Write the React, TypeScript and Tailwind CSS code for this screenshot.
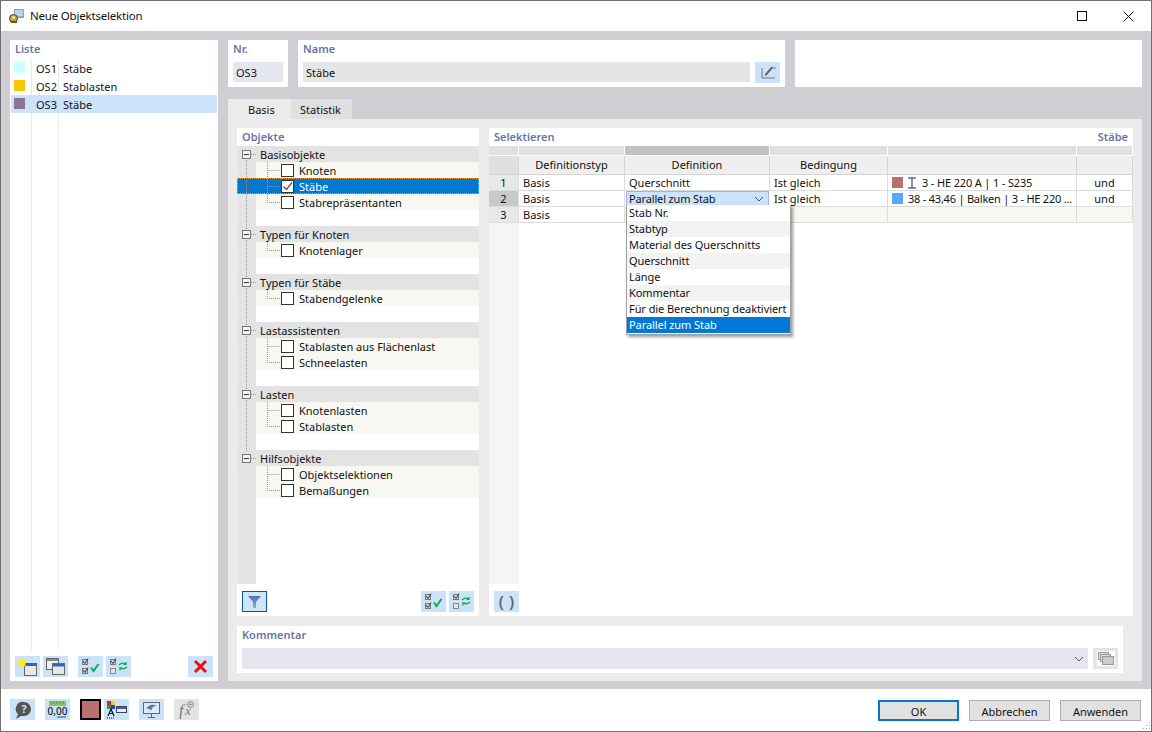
import React from "react";

const Title = ({ children, className = "" }: { children: React.ReactNode; className?: string }) => (
  <div className={`text-[#6a74a4] font-semibold ${className}`}>{children}</div>
);

const IconBtn = ({ children, className = "bg-[#cae3f8]" }: { children: React.ReactNode; className?: string }) => (
  <div className={`w-[25px] h-[21px] shrink-0 flex items-center justify-center ${className}`}>{children}</div>
);

const CheckAll = () => (
  <svg width="22" height="19" viewBox="0 0 22 19">
    <rect x="2.5" y="2.5" width="5" height="5" fill="#d8d8d8" stroke="#777" />
    <path d="M3 4l2 2.5L8 1.5" fill="none" stroke="#333" />
    <rect x="2.5" y="11.5" width="5" height="5" fill="#d8d8d8" stroke="#777" />
    <path d="M3 13l2 2.5 3-5" fill="none" stroke="#333" />
    <path d="M11 10.5l2.5 3.5 5-7" fill="none" stroke="#10a850" strokeWidth="2" />
  </svg>
);
const CheckSwap = () => (
  <svg width="22" height="19" viewBox="0 0 22 19">
    <rect x="2.5" y="2.5" width="5" height="5" fill="#d8d8d8" stroke="#777" />
    <path d="M3 4l2 2.5L8 1.5" fill="none" stroke="#333" />
    <rect x="2.5" y="11.5" width="5" height="5" fill="#dfe8f0" stroke="#888" />
    <path d="M11 8c2-2 5-2 7-1M18 5v2.4h-2.4" fill="none" stroke="#10a850" strokeWidth="1.3" />
    <path d="M19 10c-2 2-5 2-7 1M12 13.4V11h2.4" fill="none" stroke="#10a850" strokeWidth="1.3" />
  </svg>
);
const NewWin = () => (
  <svg width="23" height="20" viewBox="0 0 23 20">
    <rect x="8.5" y="6.5" width="12" height="12" fill="#e8e8e8" stroke="#666" />
    <rect x="9" y="6" width="12" height="3" fill="#2a62c8" />
    <path d="M6 0l1 3 3-1-1 2.5 3 1-3 1 1 3-3-1.5-1 3-1-3-3 1.5 1-3-3-1 3-1-1-2.5 3 1z" fill="#f8ec20" />
  </svg>
);
const CopyWin = () => (
  <svg width="23" height="20" viewBox="0 0 23 20">
    <rect x="2.5" y="1.5" width="12" height="11" fill="#eee" stroke="#666" />
    <rect x="3" y="2" width="11" height="2" fill="#889" />
    <rect x="8.5" y="6.5" width="12" height="11" fill="#e8e8e8" stroke="#666" />
    <rect x="9" y="7" width="11" height="2.5" fill="#2a62c8" />
  </svg>
);

const Chevron = () => (
  <svg width="10" height="6" viewBox="0 0 10 6"><path d="M1 1l4 4 4-4" fill="none" stroke="#555" strokeWidth="1" /></svg>
);

const ListRow = ({ color, no, name, sel }: { color: string; no: string; name: string; sel?: boolean }) => (
  <div className={`flex h-[18px] items-center ${sel ? "bg-[#cce4fb]" : ""}`}>
    <div className={`w-[21px] h-full pl-[3px] pt-[3px] ${sel ? "" : "border-r border-[#e8e8e8]"}`}>
      <div className="w-[11px] h-[11px]" style={{ background: color }} />
    </div>
    <div className={`w-[27px] h-full pl-[4px] leading-[20px] ${sel ? "" : "border-r border-[#e8e8e8]"}`}>{no}</div>
    <div className="pl-[4px] h-full leading-[20px]">{name}</div>
  </div>
);

const TreeHead = ({ label }: { label: string }) => (
  <div className="flex h-4 bg-[#e3e3e3] items-center">
    <div className="w-[19px] h-full flex items-center pl-[5px] shrink-0">
      <div className="relative w-[9px] h-[9px] border border-[#777] bg-[#f4f4f4] flex items-center justify-center">
        <div className="w-[5px] h-px bg-[#333]" />
      </div>
      <div className="w-[5px] border-t border-dotted border-[#999]" />
    </div>
    <span className="ml-[4px] h-full leading-[18px]">{label}</span>
  </div>
);

const Connector = ({ last }: { last?: boolean }) => (
  <svg width="25" height="16" viewBox="0 0 25 16" className="shrink-0">
    <path d={last ? "M11.5 0V8.5H24" : "M11.5 0V16M11.5 8.5H24"} stroke="#999" strokeDasharray="1 1" fill="none" />
  </svg>
);

const TreeItem = ({ label, last, sel }: { label: string; last?: boolean; sel?: boolean }) => (
  <div
    className={`flex h-4 items-center ${
      sel ? "bg-[#0078d0] text-white outline outline-1 -outline-offset-1 outline-dotted outline-[#f0a040]" : "bg-[#f7f8f2]"
    }`}
  >
    <div className={`w-[19px] h-full shrink-0 ${sel ? "" : "bg-[#e5e5e5]"}`} />
    <Connector last={last} />
    <div className="w-[13px] h-[13px] border border-[#333] bg-white shrink-0 flex items-center justify-center">
      {sel && (
        <svg width="11" height="11" viewBox="0 0 11 11"><path d="M1.5 5.5l3 3 5.5-7" fill="none" stroke="#555" strokeWidth="1.3" /></svg>
      )}
    </div>
    <span className="ml-[5px] h-full leading-[18px]">{label}</span>
  </div>
);

const TreeBlank = () => (
  <div className="flex h-4"><div className="w-[19px] bg-[#e5e5e5]" /></div>
);

const groups: { h: string; items: string[] }[] = [
  { h: "Typen für Knoten", items: ["Knotenlager"] },
  { h: "Typen für Stäbe", items: ["Stabendgelenke"] },
  { h: "Lastassistenten", items: ["Stablasten aus Flächenlast", "Schneelasten"] },
  { h: "Lasten", items: ["Knotenlasten", "Stablasten"] },
  { h: "Hilfsobjekte", items: ["Objektselektionen", "Bemaßungen"] },
];

const widths = ["w-[30px]", "w-[106px]", "w-[145px]", "w-[118px]", "w-[189px]", "w-[56px]"];

const dropdown = [
  "Stab Nr.",
  "Stabtyp",
  "Material des Querschnitts",
  "Querschnitt",
  "Länge",
  "Kommentar",
  "Für die Berechnung deaktiviert",
];

const Dropdown = () => (
  <div className="absolute left-[1px] top-[14px] w-[165px] z-10 bg-white border border-[#a0a0a0] border-t-0 pb-px tracking-[-0.07px] shadow-[2px_2px_3px_rgba(0,0,0,0.4)]">
    {dropdown.map((d, i) => (
      <div key={d} className={`h-4 leading-[15px] pl-[2px] whitespace-nowrap ${i % 2 ? "bg-[#f3f3f3]" : "bg-white"}`}>{d}</div>
    ))}
    <div className="h-4 leading-[15px] pl-[2px] bg-[#0078d7] text-white">Parallel zum Stab</div>
  </div>
);

const Cell = ({ w, className = "", children }: { w: string; className?: string; children?: React.ReactNode }) => (
  <div className={`${w} h-4 shrink-0 border-r border-b border-[#dcdcdc] leading-[15px] whitespace-nowrap overflow-hidden ${className}`}>{children}</div>
);

const Table = () => (
  <div className="flex flex-col flex-1 min-h-0 text-[#111]">
    <div className="flex h-[9px] shrink-0">
      {widths.map((w, i) => (
        <div key={i} className={`${w} border-r border-white ${i === 2 ? "bg-[#c2c2c2]" : "bg-[#e0e0e0]"}`} />
      ))}
    </div>
    <div className="flex h-[19px] shrink-0 mt-px">
      {["", "Definitionstyp", "Definition", "Bedingung", "", ""].map((t, i) => (
        <div key={i} className={`${widths[i]} border-r border-b border-[#d4d4d4] text-center leading-[18px] ${i === 0 ? "bg-[#e0e0e0]" : "bg-[#efefef]"}`}>{t}</div>
      ))}
    </div>
    <div className="flex shrink-0">
      <Cell w={widths[0]} className="bg-[#e8e8e8] text-center">1</Cell>
      <Cell w={widths[1]} className="pl-[4px]">Basis</Cell>
      <Cell w={widths[2]} className="pl-[4px]">Querschnitt</Cell>
      <Cell w={widths[3]} className="pl-[4px]">Ist gleich</Cell>
      <Cell w={widths[4]} className="pl-[4px] flex items-center">
        <div className="w-[11px] h-[11px] bg-[#b87070] shrink-0" />
        <svg width="10" height="12" viewBox="0 0 10 12" className="ml-[4px] shrink-0"><path d="M1 1h8M1 11h8M5 1v10" stroke="#1a1a70" fill="none" /></svg>
        <span className="ml-[5px] tracking-[-0.15px]">3 - HE 220 A | 1 - S235</span>
      </Cell>
      <Cell w={widths[5]} className="text-center">und</Cell>
    </div>
    <div className="flex shrink-0">
      <Cell w={widths[0]} className="bg-[#c8c8c8] text-center">2</Cell>
      <Cell w={widths[1]} className="pl-[4px]">Basis</Cell>
      <div className={`${widths[2]} relative h-4 shrink-0`}>
        <div className="h-4 ml-px mr-px bg-[#cce4fb] border border-[#a8b0e0] flex items-center justify-between pl-[2px] pr-[4px] leading-[14px]">
          <span className="tracking-[-0.15px]">Parallel zum Stab</span>
          <Chevron />
        </div>
        <Dropdown />
      </div>
      <Cell w={widths[3]} className="pl-[4px]">Ist gleich</Cell>
      <Cell w={widths[4]} className="pl-[4px] flex items-center">
        <div className="w-[11px] h-[11px] bg-[#55a8fa] shrink-0" />
        <span className="ml-[5px] tracking-[-0.22px]">38 - 43,46 | Balken | 3 - HE 220 ...</span>
      </Cell>
      <Cell w={widths[5]} className="text-center">und</Cell>
    </div>
    <div className="flex shrink-0">
      <Cell w={widths[0]} className="bg-[#e8e8e8] text-center">3</Cell>
      <Cell w={widths[1]} className="pl-[4px]">Basis</Cell>
      <Cell w={widths[2]} className="bg-[#f7f8f2]" />
      <Cell w={widths[3]} className="bg-[#f7f8f2]" />
      <Cell w={widths[4]} className="bg-[#f7f8f2]" />
      <Cell w={widths[5]} className="bg-[#f7f8f2]" />
    </div>
    <div className="w-[30px] flex-1 bg-[#f5f5f5]" />
  </div>
);

const PushButton = ({ label, def }: { label: string; def?: boolean }) => (
  <div className={`w-[81px] h-[21px] bg-[#e1e1e1] text-center ${def ? "border-2 border-[#0078d7] leading-[19px]" : "border border-[#adadad] leading-[21px]"}`}>{label}</div>
);

export default function App() {
  return (
    <div
      className="w-[1152px] h-[732px] border border-[#707070] bg-white flex flex-col text-[11px] text-[#111] overflow-hidden"
      style={{ fontFamily: '"Noto Sans", "Liberation Sans", sans-serif' }}
    >
      {/* title bar */}
      <div className="h-[30px] shrink-0 flex items-center pl-[8px] pr-[17px]">
        <svg width="16" height="16" viewBox="0 0 16 16" className="shrink-0">
          <rect x="5" y="1" width="10" height="9" fill="#7fa8d8" />
          <path d="M6 3h8M6 5h8M6 7h8" stroke="#fff" />
          <circle cx="4.5" cy="10.5" r="4" fill="#c8a040" stroke="#604010" />
          <circle cx="4.5" cy="9.5" r="1.3" fill="#fff" />
          <rect x="2" y="13" width="6" height="2" fill="#705020" />
        </svg>
        <span className="ml-[5px] text-[11.5px] tracking-[-0.2px]">Neue Objektselektion</span>
        <svg width="10" height="10" viewBox="0 0 10 10" className="ml-auto mr-[36px]"><rect x="0.5" y="0.5" width="9" height="9" fill="none" stroke="#111" /></svg>
        <svg width="11" height="11" viewBox="0 0 11 11"><path d="M0.5 0.5l10 10M10.5 0.5l-10 10" stroke="#111" fill="none" /></svg>
      </div>

      {/* body */}
      <div className="flex-1 min-h-0 bg-[#d0ced3] pt-[9px] pb-[8px] px-[9px] flex gap-[10px]">
        {/* list */}
        <div className="w-[208px] bg-white flex flex-col px-px">
          <Title className="h-[19px] leading-[18px] pl-[4px]">Liste</Title>
          <ListRow color="#ccffff" no="OS1" name="Stäbe" />
          <ListRow color="#f9c400" no="OS2" name="Stablasten" />
          <ListRow color="#8a7597" no="OS3" name="Stäbe" sel />
          <div className="flex flex-1 min-h-0">
            <div className="w-[21px] border-r border-[#e8e8e8]" />
            <div className="w-[27px] border-r border-[#e8e8e8]" />
          </div>
          <div className="h-[31px] shrink-0 flex pt-[6px] pl-[4px]">
            <IconBtn><NewWin /></IconBtn>
            <IconBtn className="bg-[#cae3f8] ml-[3px]"><CopyWin /></IconBtn>
            <IconBtn className="bg-[#cae3f8] ml-[10px]"><CheckAll /></IconBtn>
            <IconBtn className="bg-[#cae3f8] ml-[3px]"><CheckSwap /></IconBtn>
            <IconBtn className="bg-[#cae3f8] ml-[57px]">
              <svg width="15" height="15" viewBox="0 0 15 15"><path d="M2 2l11 11M13 2L2 13" stroke="#e81010" strokeWidth="3" fill="none" /></svg>
            </IconBtn>
          </div>
        </div>

        {/* right column */}
        <div className="w-[914px] flex flex-col">
          <div className="flex h-[47px] gap-[10px] shrink-0">
            <div className="w-[60px] bg-white px-[5px]">
              <Title className="h-[22px] leading-[18px]">Nr.</Title>
              <div className="h-[20px] bg-[#e6e6f0] pl-[3px] leading-[22px]">OS3</div>
            </div>
            <div className="w-[487px] bg-white px-[5px]">
              <Title className="h-[22px] leading-[18px]">Name</Title>
              <div className="flex gap-[5px]">
                <div className="flex-1 h-[20px] bg-[#e5e5e5] pl-[3px] leading-[22px]">Stäbe</div>
                <IconBtn className="bg-[#cae3f8] h-[20px]">
                  <svg width="18" height="16" viewBox="0 0 18 16">
                    <path d="M3 3v10h13" stroke="#777" fill="none" />
                    <path d="M12.5 1.5l1.5 1.5-6 7-2.5 1 1-2.5z" fill="#666" />
                    <path d="M13 3h4" stroke="#777" />
                  </svg>
                </IconBtn>
              </div>
            </div>
            <div className="flex-1 bg-white" />
          </div>

          <div className="flex h-[20px] mt-[12px] shrink-0">
            <div className="w-[63px] bg-[#ebebeb] pl-[20px] leading-[21px]">Basis</div>
            <div className="w-[61px] bg-[#e0e0e0] pl-[9px] leading-[21px]">Statistik</div>
          </div>

          <div className="flex-1 min-h-0 bg-[#ebebeb] pt-[9px] px-[9px] flex flex-col">
            <div className="flex h-[488px] gap-[10px] shrink-0">
              {/* objects */}
              <div className="w-[242px] bg-white flex flex-col relative">
                <Title className="h-[18px] leading-[18px] pl-[5px]">Objekte</Title>
                <div className="absolute left-[9px] top-[27px] h-[296px] border-l border-dotted border-[#999] z-0" />
                <TreeHead label="Basisobjekte" />
                <TreeItem label="Knoten" />
                <TreeItem label="Stäbe" sel />
                <TreeItem label="Stabrepräsentanten" last />
                <TreeBlank />
                {groups.map((g) => (
                  <React.Fragment key={g.h}>
                    <TreeHead label={g.h} />
                    {g.items.map((it, i) => (
                      <TreeItem key={it} label={it} last={i === g.items.length - 1} />
                    ))}
                    <TreeBlank />
                  </React.Fragment>
                ))}
                <div className="w-[19px] flex-1 bg-[#e5e5e5]" />
                <div className="h-[32px] shrink-0 flex items-start pt-[7px] pl-[5px]">
                  <IconBtn className="bg-[#cfe5f9] border border-[#005a9e]">
                    <svg width="15" height="14" viewBox="0 0 15 14">
                      <defs>
                        <linearGradient id="fn" x1="0" y1="0" x2="0" y2="1">
                          <stop offset="0" stopColor="#4f72b0" />
                          <stop offset="1" stopColor="#86aee8" />
                        </linearGradient>
                      </defs>
                      <path d="M1 1h13L9 7v6H6V7z" fill="url(#fn)" />
                    </svg>
                  </IconBtn>
                  <IconBtn className="bg-[#cae3f8] ml-auto"><CheckAll /></IconBtn>
                  <IconBtn className="bg-[#cae3f8] ml-[3px] mr-[5px]"><CheckSwap /></IconBtn>
                </div>
              </div>

              {/* selection */}
              <div className="w-[644px] bg-white flex flex-col">
                <div className="h-[18px] shrink-0 flex justify-between px-[5px] leading-[18px]">
                  <Title>Selektieren</Title>
                  <Title>Stäbe</Title>
                </div>
                <Table />
                <div className="h-[32px] shrink-0 pt-[7px] pl-[5px]">
                  <IconBtn className="bg-[#cae3f8] font-semibold text-[#666] text-[16px] leading-none gap-[5px]">
                    <span>(</span>
                    <span>)</span>
                  </IconBtn>
                </div>
              </div>
            </div>

            <div className="w-[886px] h-[47px] mt-[10px] bg-white px-[5px] shrink-0">
              <Title className="h-[22px] leading-[18px]">Kommentar</Title>
              <div className="flex gap-[5px]">
                <div className="flex-1 h-[21px] bg-[#e6e6f0] flex items-center justify-end pr-[4px]"><Chevron /></div>
                <IconBtn className="bg-[#e4e4e4]">
                  <svg width="18" height="15" viewBox="0 0 18 15">
                    <rect width="18" height="15" fill="#fff" />
                    <rect x="1.5" y="1.5" width="10" height="7" fill="#ddd" stroke="#999" />
                    <rect x="3.5" y="3.5" width="10" height="7" fill="#ddd" stroke="#999" />
                    <rect x="5.5" y="5.5" width="11" height="8" fill="#ccc" stroke="#999" />
                  </svg>
                </IconBtn>
              </div>
            </div>
          </div>
        </div>
      </div>

      {/* bottom bar */}
      <div className="h-[42px] shrink-0 flex items-start pl-[9px] relative">
        <div className="flex items-start mt-[10px]">
          <IconBtn>
            <svg width="18" height="18" viewBox="0 0 18 18">
              <path d="M10 1a7 7 0 0 1 0 14H7l-5 3 2-5A7 7 0 0 1 10 1z" fill="#555" />
              <text x="10" y="12" fontSize="11" fontWeight="700" fill="#cae3f8" textAnchor="middle">?</text>
            </svg>
          </IconBtn>
          <IconBtn className="bg-[#cae3f8] ml-[10px]">
            <svg width="21" height="19" viewBox="0 0 21 19">
              <rect x="2" y="1" width="17" height="5" fill="#8cc860" />
              <path d="M4 4V1M7 4V1M10 4V1M13 4V1M16 4V1" stroke="#5a9a30" />
              <text x="10.5" y="15" fontSize="10" fontWeight="500" fill="#123" textAnchor="middle">0,00</text>
              <path d="M10 17h9" stroke="#2040a0" />
            </svg>
          </IconBtn>
          <div className="w-[21px] h-[21px] ml-[10px] bg-[#b87070] border-2 border-black" />
          <IconBtn className="bg-[#cae3f8] ml-[3px]">
            <svg width="21" height="19" viewBox="0 0 21 19">
              <rect x="1" y="1" width="4" height="4" fill="#e02020" />
              <rect x="5" y="1" width="4" height="4" fill="#f0d020" />
              <rect x="1" y="5" width="4" height="4" fill="#20a040" />
              <rect x="5" y="5" width="4" height="4" fill="#2040d0" />
              <path d="M2 16L5 9l3 7M3.2 13.5h3.6" stroke="#111" strokeWidth="1.2" fill="none" />
              <rect x="10.5" y="6.5" width="10" height="6" fill="#eee" stroke="#445" />
              <rect x="11" y="7" width="9" height="2" fill="#2a62c8" />
              <path d="M1 18h8" stroke="#111" strokeDasharray="1 1" />
            </svg>
          </IconBtn>
          <IconBtn className="bg-[#cae3f8] ml-[10px]">
            <svg width="21" height="19" viewBox="0 0 21 19">
              <rect x="2.5" y="2.5" width="16" height="11" fill="#dfeaf5" stroke="#667" />
              <path d="M5 9c3-5 7-5 11-3-3 0-5 1-6 5-1-2-3-3-5-2z" fill="#4a80b8" />
              <path d="M10.5 14v3M7 17.5h7" stroke="#667" />
            </svg>
          </IconBtn>
          <IconBtn className="bg-[#e4e4e4] ml-[10px]">
            <svg width="21" height="19" viewBox="0 0 21 19">
              <text x="3" y="16" fontSize="16" fontStyle="italic" fill="#777" fontFamily="Liberation Serif, serif">f</text>
              <text x="9" y="15" fontSize="13" fontStyle="italic" fill="#777" fontFamily="Liberation Serif, serif">x</text>
              <circle cx="14.5" cy="4.5" r="3" fill="none" stroke="#888" />
              <path d="M12.5 4.5h4M14.5 2.5v4" stroke="#888" strokeWidth="0.7" />
            </svg>
          </IconBtn>
        </div>
        <div className="ml-auto mr-[10px] mt-[11px] flex gap-[10px]">
          <PushButton label="OK" def />
          <PushButton label="Abbrechen" />
          <PushButton label="Anwenden" />
        </div>
        <svg width="10" height="10" viewBox="0 0 10 10" className="absolute right-0 bottom-0">
          <path d="M8 1h1v1H8zM5 4h1v1H5zM8 4h1v1H8zM2 7h1v1H2zM5 7h1v1H5zM8 7h1v1H8z" fill="#aaa" />
        </svg>
      </div>
    </div>
  );
}
